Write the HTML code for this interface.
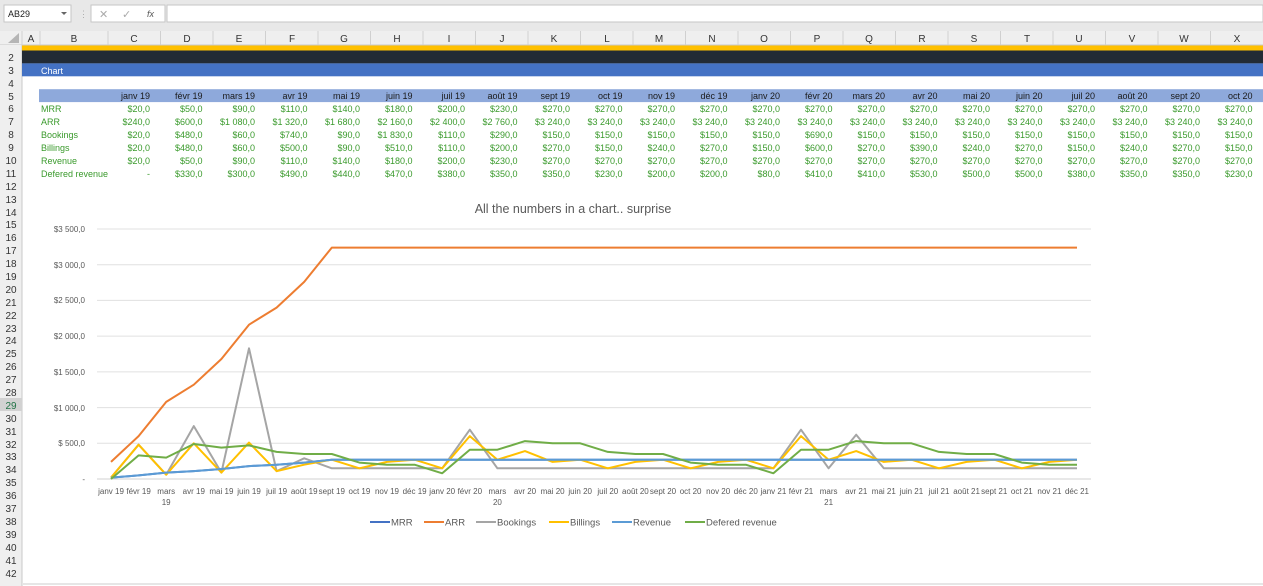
<!DOCTYPE html>
<html><head><meta charset="utf-8"><style>
html,body{margin:0;padding:0;background:#fff;width:1263px;height:586px;overflow:hidden}
svg{display:block;font-family:"Liberation Sans",sans-serif}
</style></head><body>
<svg width="1263" height="586" viewBox="0 0 1263 586" xmlns="http://www.w3.org/2000/svg">
<!-- formula bar -->
<rect x="0" y="0" width="1263" height="31" fill="#e8e8e8"/>
<rect x="4" y="5" width="67" height="17" fill="#fff" stroke="#c6c6c6"/>
<text x="8" y="17" font-size="9" fill="#222">AB29</text>
<path d="M61 12 L67 12 L64 15 Z" fill="#666"/>
<text x="79" y="17" font-size="9" fill="#aaa">⋮</text>
<rect x="91" y="5" width="74" height="17" fill="#fff" stroke="#c6c6c6"/>
<text x="99" y="18" font-size="11" fill="#aaa">✕</text>
<text x="122" y="18" font-size="11" fill="#aaa">✓</text>
<text x="147" y="17" font-size="9" font-style="italic" fill="#555">fx</text>
<rect x="167" y="5" width="1096" height="17" fill="#fff" stroke="#c6c6c6"/>
<!-- column headers -->
<rect x="0" y="31" width="1263" height="14" fill="#efefef"/>
<line x1="0" y1="45" x2="1263" y2="45" stroke="#c8c8c8"/>
<path d="M8 43 L19 43 L19 33 Z" fill="#b5b5b5"/>
<g stroke="#d0d0d0">
<line x1="22" y1="31" x2="22" y2="45"/><line x1="40" y1="31" x2="40" y2="45"/><line x1="108" y1="31" x2="108" y2="45"/>
<line x1="160.5" y1="31" x2="160.5" y2="45"/><line x1="213" y1="31" x2="213" y2="45"/><line x1="265.5" y1="31" x2="265.5" y2="45"/><line x1="318" y1="31" x2="318" y2="45"/><line x1="370.5" y1="31" x2="370.5" y2="45"/><line x1="423" y1="31" x2="423" y2="45"/><line x1="475.5" y1="31" x2="475.5" y2="45"/><line x1="528" y1="31" x2="528" y2="45"/><line x1="580.5" y1="31" x2="580.5" y2="45"/><line x1="633" y1="31" x2="633" y2="45"/><line x1="685.5" y1="31" x2="685.5" y2="45"/><line x1="738" y1="31" x2="738" y2="45"/><line x1="790.5" y1="31" x2="790.5" y2="45"/><line x1="843" y1="31" x2="843" y2="45"/><line x1="895.5" y1="31" x2="895.5" y2="45"/><line x1="948" y1="31" x2="948" y2="45"/><line x1="1000.5" y1="31" x2="1000.5" y2="45"/><line x1="1053" y1="31" x2="1053" y2="45"/><line x1="1105.5" y1="31" x2="1105.5" y2="45"/><line x1="1158" y1="31" x2="1158" y2="45"/><line x1="1210.5" y1="31" x2="1210.5" y2="45"/>
</g>
<g font-size="10" fill="#333" text-anchor="middle">
<text x="31" y="42">A</text><text x="74" y="42">B</text><text x="134" y="42">C</text><text x="187" y="42">D</text><text x="239" y="42">E</text><text x="292" y="42">F</text><text x="344" y="42">G</text><text x="397" y="42">H</text><text x="449" y="42">I</text><text x="502" y="42">J</text><text x="554" y="42">K</text><text x="607" y="42">L</text><text x="659" y="42">M</text><text x="712" y="42">N</text><text x="764" y="42">O</text><text x="817" y="42">P</text><text x="869" y="42">Q</text><text x="922" y="42">R</text><text x="974" y="42">S</text><text x="1027" y="42">T</text><text x="1079" y="42">U</text><text x="1132" y="42">V</text><text x="1184" y="42">W</text><text x="1237" y="42">X</text>
</g>
<!-- row headers -->
<rect x="0" y="45" width="22" height="541" fill="#efefef"/>
<line x1="22" y1="45" x2="22" y2="586" stroke="#c8c8c8"/>
<rect x="0" y="398" width="22" height="13" fill="#d2d2d2"/>
<g font-size="10" fill="#333" text-anchor="middle">
<text x="11" y="61">2</text><text x="11" y="74">3</text><text x="11" y="87">4</text><text x="11" y="100">5</text><text x="11" y="112">6</text><text x="11" y="125">7</text><text x="11" y="138">8</text><text x="11" y="151">9</text><text x="11" y="164">10</text><text x="11" y="177">11</text><text x="11" y="190">12</text><text x="11" y="203">13</text><text x="11" y="216">14</text><text x="11" y="228">15</text><text x="11" y="241">16</text><text x="11" y="254">17</text><text x="11" y="267">18</text><text x="11" y="280">19</text><text x="11" y="293">20</text><text x="11" y="306">21</text><text x="11" y="319">22</text><text x="11" y="332">23</text><text x="11" y="344">24</text><text x="11" y="357">25</text><text x="11" y="370">26</text><text x="11" y="383">27</text><text x="11" y="396">28</text><text x="11" y="409" fill="#217346">29</text><text x="11" y="422">30</text><text x="11" y="435">31</text><text x="11" y="448">32</text><text x="11" y="460">33</text><text x="11" y="473">34</text><text x="11" y="486">35</text><text x="11" y="499">36</text><text x="11" y="512">37</text><text x="11" y="525">38</text><text x="11" y="538">39</text><text x="11" y="551">40</text><text x="11" y="564">41</text><text x="11" y="577">42</text>
</g>
<!-- bands -->
<rect x="22" y="45.5" width="1241" height="5" fill="#ffc000"/>
<rect x="22" y="50.5" width="1241" height="12.9" fill="#222b35"/>
<rect x="22" y="63.4" width="1241" height="12.9" fill="#4472c4"/>
<text x="41" y="74" font-size="9" fill="#fff">Chart</text>
<rect x="39" y="89.2" width="1224" height="12.9" fill="#8ea9db"/>
<!-- table -->
<g font-size="9" text-anchor="end" fill="#1a1a1a">
<text y="99"><tspan x="150">janv 19</tspan><tspan x="202.5">févr 19</tspan><tspan x="255">mars 19</tspan><tspan x="307.5">avr 19</tspan><tspan x="360">mai 19</tspan><tspan x="412.5">juin 19</tspan><tspan x="465">juil 19</tspan><tspan x="517.5">août 19</tspan><tspan x="570">sept 19</tspan><tspan x="622.5">oct 19</tspan><tspan x="675">nov 19</tspan><tspan x="727.5">déc 19</tspan><tspan x="780">janv 20</tspan><tspan x="832.5">févr 20</tspan><tspan x="885">mars 20</tspan><tspan x="937.5">avr 20</tspan><tspan x="990">mai 20</tspan><tspan x="1042.5">juin 20</tspan><tspan x="1095">juil 20</tspan><tspan x="1147.5">août 20</tspan><tspan x="1200">sept 20</tspan><tspan x="1252.5">oct 20</tspan></text>
</g>
<g font-size="9" fill="#3a9a2c">
<text x="41" y="112">MRR</text><text x="41" y="125">ARR</text><text x="41" y="138">Bookings</text><text x="41" y="151">Billings</text><text x="41" y="164">Revenue</text><text x="41" y="177">Defered revenue</text>
</g>
<g font-size="9" text-anchor="end" fill="#3a9a2c">
<text y="112"><tspan x="150">$20,0</tspan><tspan x="202.5">$50,0</tspan><tspan x="255">$90,0</tspan><tspan x="307.5">$110,0</tspan><tspan x="360">$140,0</tspan><tspan x="412.5">$180,0</tspan><tspan x="465">$200,0</tspan><tspan x="517.5">$230,0</tspan><tspan x="570">$270,0</tspan><tspan x="622.5">$270,0</tspan><tspan x="675">$270,0</tspan><tspan x="727.5">$270,0</tspan><tspan x="780">$270,0</tspan><tspan x="832.5">$270,0</tspan><tspan x="885">$270,0</tspan><tspan x="937.5">$270,0</tspan><tspan x="990">$270,0</tspan><tspan x="1042.5">$270,0</tspan><tspan x="1095">$270,0</tspan><tspan x="1147.5">$270,0</tspan><tspan x="1200">$270,0</tspan><tspan x="1252.5">$270,0</tspan></text>
<text y="125"><tspan x="150">$240,0</tspan><tspan x="202.5">$600,0</tspan><tspan x="255">$1 080,0</tspan><tspan x="307.5">$1 320,0</tspan><tspan x="360">$1 680,0</tspan><tspan x="412.5">$2 160,0</tspan><tspan x="465">$2 400,0</tspan><tspan x="517.5">$2 760,0</tspan><tspan x="570">$3 240,0</tspan><tspan x="622.5">$3 240,0</tspan><tspan x="675">$3 240,0</tspan><tspan x="727.5">$3 240,0</tspan><tspan x="780">$3 240,0</tspan><tspan x="832.5">$3 240,0</tspan><tspan x="885">$3 240,0</tspan><tspan x="937.5">$3 240,0</tspan><tspan x="990">$3 240,0</tspan><tspan x="1042.5">$3 240,0</tspan><tspan x="1095">$3 240,0</tspan><tspan x="1147.5">$3 240,0</tspan><tspan x="1200">$3 240,0</tspan><tspan x="1252.5">$3 240,0</tspan></text>
<text y="138"><tspan x="150">$20,0</tspan><tspan x="202.5">$480,0</tspan><tspan x="255">$60,0</tspan><tspan x="307.5">$740,0</tspan><tspan x="360">$90,0</tspan><tspan x="412.5">$1 830,0</tspan><tspan x="465">$110,0</tspan><tspan x="517.5">$290,0</tspan><tspan x="570">$150,0</tspan><tspan x="622.5">$150,0</tspan><tspan x="675">$150,0</tspan><tspan x="727.5">$150,0</tspan><tspan x="780">$150,0</tspan><tspan x="832.5">$690,0</tspan><tspan x="885">$150,0</tspan><tspan x="937.5">$150,0</tspan><tspan x="990">$150,0</tspan><tspan x="1042.5">$150,0</tspan><tspan x="1095">$150,0</tspan><tspan x="1147.5">$150,0</tspan><tspan x="1200">$150,0</tspan><tspan x="1252.5">$150,0</tspan></text>
<text y="151"><tspan x="150">$20,0</tspan><tspan x="202.5">$480,0</tspan><tspan x="255">$60,0</tspan><tspan x="307.5">$500,0</tspan><tspan x="360">$90,0</tspan><tspan x="412.5">$510,0</tspan><tspan x="465">$110,0</tspan><tspan x="517.5">$200,0</tspan><tspan x="570">$270,0</tspan><tspan x="622.5">$150,0</tspan><tspan x="675">$240,0</tspan><tspan x="727.5">$270,0</tspan><tspan x="780">$150,0</tspan><tspan x="832.5">$600,0</tspan><tspan x="885">$270,0</tspan><tspan x="937.5">$390,0</tspan><tspan x="990">$240,0</tspan><tspan x="1042.5">$270,0</tspan><tspan x="1095">$150,0</tspan><tspan x="1147.5">$240,0</tspan><tspan x="1200">$270,0</tspan><tspan x="1252.5">$150,0</tspan></text>
<text y="164"><tspan x="150">$20,0</tspan><tspan x="202.5">$50,0</tspan><tspan x="255">$90,0</tspan><tspan x="307.5">$110,0</tspan><tspan x="360">$140,0</tspan><tspan x="412.5">$180,0</tspan><tspan x="465">$200,0</tspan><tspan x="517.5">$230,0</tspan><tspan x="570">$270,0</tspan><tspan x="622.5">$270,0</tspan><tspan x="675">$270,0</tspan><tspan x="727.5">$270,0</tspan><tspan x="780">$270,0</tspan><tspan x="832.5">$270,0</tspan><tspan x="885">$270,0</tspan><tspan x="937.5">$270,0</tspan><tspan x="990">$270,0</tspan><tspan x="1042.5">$270,0</tspan><tspan x="1095">$270,0</tspan><tspan x="1147.5">$270,0</tspan><tspan x="1200">$270,0</tspan><tspan x="1252.5">$270,0</tspan></text>
<text y="177"><tspan x="150">-</tspan><tspan x="202.5">$330,0</tspan><tspan x="255">$300,0</tspan><tspan x="307.5">$490,0</tspan><tspan x="360">$440,0</tspan><tspan x="412.5">$470,0</tspan><tspan x="465">$380,0</tspan><tspan x="517.5">$350,0</tspan><tspan x="570">$350,0</tspan><tspan x="622.5">$230,0</tspan><tspan x="675">$200,0</tspan><tspan x="727.5">$200,0</tspan><tspan x="780">$80,0</tspan><tspan x="832.5">$410,0</tspan><tspan x="885">$410,0</tspan><tspan x="937.5">$530,0</tspan><tspan x="990">$500,0</tspan><tspan x="1042.5">$500,0</tspan><tspan x="1095">$380,0</tspan><tspan x="1147.5">$350,0</tspan><tspan x="1200">$350,0</tspan><tspan x="1252.5">$230,0</tspan></text>
</g>
<rect x="108" y="168" width="1" height="0" fill="#fff"/>
<!-- chart -->
<text x="573" y="213" font-size="12.5" fill="#595959" text-anchor="middle">All the numbers in a chart.. surprise</text>
<g stroke="#e0e0e0" stroke-width="1">
<line x1="97" y1="229" x2="1091" y2="229"/><line x1="97" y1="264.7" x2="1091" y2="264.7"/><line x1="97" y1="300.4" x2="1091" y2="300.4"/><line x1="97" y1="336.1" x2="1091" y2="336.1"/><line x1="97" y1="371.9" x2="1091" y2="371.9"/><line x1="97" y1="407.6" x2="1091" y2="407.6"/><line x1="97" y1="443.3" x2="1091" y2="443.3"/>
</g>
<line x1="97" y1="479" x2="1091" y2="479" stroke="#d0d0d0"/>
<g font-size="8" fill="#595959" text-anchor="end">
<text x="85" y="232">$3 500,0</text><text x="85" y="268">$3 000,0</text><text x="85" y="303">$2 500,0</text><text x="85" y="339">$2 000,0</text><text x="85" y="375">$1 500,0</text><text x="85" y="411">$1 000,0</text><text x="85" y="446">$ 500,0</text><text x="85" y="482">-</text>
</g>
<g font-size="8" fill="#595959" text-anchor="middle">
<text x="111" y="494">janv 19</text><text x="138.6" y="494">févr 19</text><text x="166.2" y="494">mars</text><text x="166.2" y="505">19</text><text x="193.8" y="494">avr 19</text><text x="221.4" y="494">mai 19</text><text x="249" y="494">juin 19</text><text x="276.6" y="494">juil 19</text><text x="304.2" y="494">août 19</text><text x="331.8" y="494">sept 19</text><text x="359.4" y="494">oct 19</text><text x="387" y="494">nov 19</text><text x="414.6" y="494">déc 19</text>
<text x="442.2" y="494">janv 20</text><text x="469.8" y="494">févr 20</text><text x="497.4" y="494">mars</text><text x="497.4" y="505">20</text><text x="525" y="494">avr 20</text><text x="552.6" y="494">mai 20</text><text x="580.2" y="494">juin 20</text><text x="607.8" y="494">juil 20</text><text x="635.4" y="494">août 20</text><text x="663" y="494">sept 20</text><text x="690.6" y="494">oct 20</text><text x="718.2" y="494">nov 20</text><text x="745.8" y="494">déc 20</text>
<text x="773.4" y="494">janv 21</text><text x="801" y="494">févr 21</text><text x="828.6" y="494">mars</text><text x="828.6" y="505">21</text><text x="856.2" y="494">avr 21</text><text x="883.8" y="494">mai 21</text><text x="911.4" y="494">juin 21</text><text x="939" y="494">juil 21</text><text x="966.6" y="494">août 21</text><text x="994.2" y="494">sept 21</text><text x="1021.8" y="494">oct 21</text><text x="1049.4" y="494">nov 21</text><text x="1077" y="494">déc 21</text>
</g>
<g fill="none" stroke-width="2" stroke-linejoin="round">
<polyline stroke="#4472c4" points="111,477.6 138.6,475.4 166.2,472.6 193.8,471.1 221.4,469 249,466.1 276.6,464.7 304.2,462.6 331.8,459.7 1077,459.7"/>
<polyline stroke="#ed7d31" points="111,461.9 138.6,436.1 166.2,401.9 193.8,384.7 221.4,359 249,324.7 276.6,307.6 304.2,281.9 331.8,247.6 1077,247.6"/>
<polyline stroke="#a5a5a5" points="111,477.6 138.6,444.7 166.2,474.7 193.8,426.1 221.4,472.6 249,348.3 276.6,471.1 304.2,458.3 331.8,468.3 442.2,468.3 469.8,429.7 497.4,468.3 773.4,468.3 801,429.7 828.6,468.3 856.2,434.7 883.8,468.3 1077,468.3"/>
<polyline stroke="#ffc000" points="111,477.6 138.6,444.7 166.2,474.7 193.8,443.3 221.4,472.6 249,442.6 276.6,471.1 304.2,464.7 331.8,459.7 359.4,468.3 387,461.9 414.6,459.7 442.2,468.3 469.8,436.1 497.4,459.7 525,451.1 552.6,461.9 580.2,459.7 607.8,468.3 635.4,461.9 663,459.7 690.6,468.3 718.2,461.9 745.8,459.7 773.4,468.3 801,436.1 828.6,459.7 856.2,451.1 883.8,461.9 911.4,459.7 939,468.3 966.6,461.9 994.2,459.7 1021.8,468.3 1049.4,461.9 1077,459.7"/>
<polyline stroke="#5b9bd5" points="111,477.6 138.6,475.4 166.2,472.6 193.8,471.1 221.4,469 249,466.1 276.6,464.7 304.2,462.6 331.8,459.7 1077,459.7"/>
<polyline stroke="#70ad47" points="111,479 138.6,455.4 166.2,457.6 193.8,444 221.4,447.6 249,445.4 276.6,451.9 304.2,454 331.8,454 359.4,462.6 387,464.7 414.6,464.7 442.2,473.3 469.8,449.7 497.4,449.7 525,441.1 552.6,443.3 580.2,443.3 607.8,451.9 635.4,454 663,454 690.6,462.6 718.2,464.7 745.8,464.7 773.4,473.3 801,449.7 828.6,449.7 856.2,441.1 883.8,443.3 911.4,443.3 939,451.9 966.6,454 994.2,454 1021.8,462.6 1049.4,464.7 1077,464.7"/>
</g>
<!-- legend -->
<g stroke-width="2">
<line x1="370" y1="522" x2="390" y2="522" stroke="#4472c4"/>
<line x1="424" y1="522" x2="444" y2="522" stroke="#ed7d31"/>
<line x1="476" y1="522" x2="496" y2="522" stroke="#a5a5a5"/>
<line x1="549" y1="522" x2="569" y2="522" stroke="#ffc000"/>
<line x1="612" y1="522" x2="632" y2="522" stroke="#5b9bd5"/>
<line x1="685" y1="522" x2="705" y2="522" stroke="#70ad47"/>
</g>
<g font-size="9.5" fill="#595959">
<text x="391" y="525.5">MRR</text><text x="445" y="525.5">ARR</text><text x="497" y="525.5">Bookings</text><text x="570" y="525.5">Billings</text><text x="633" y="525.5">Revenue</text><text x="706" y="525.5">Defered revenue</text>
</g>
<line x1="22" y1="584" x2="1263" y2="584" stroke="#e6e6e6" stroke-width="2"/>
</svg>
</body></html>
